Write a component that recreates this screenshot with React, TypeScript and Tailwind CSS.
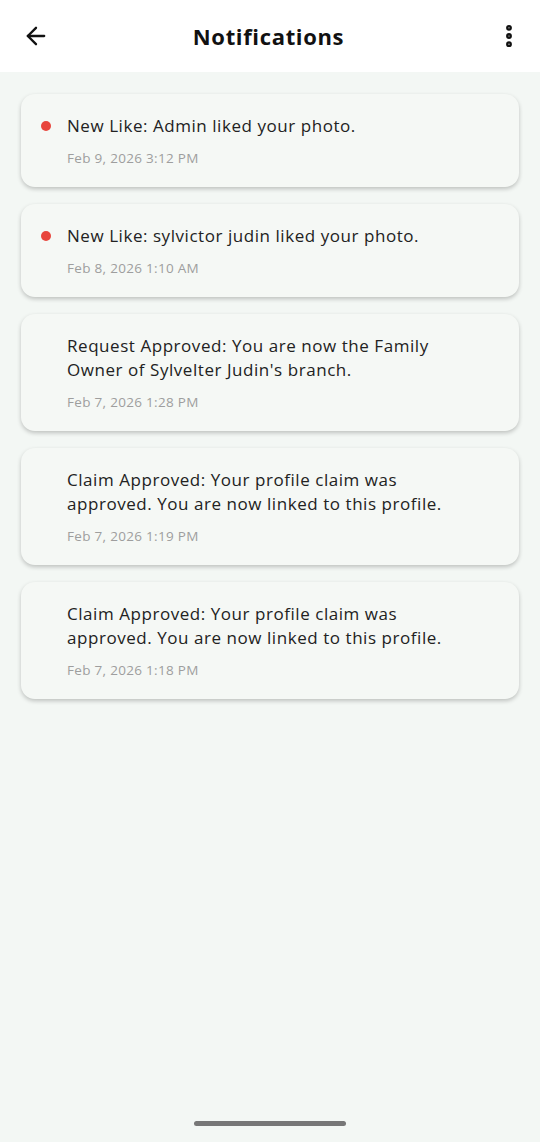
import { ArrowLeft, EllipsisVertical } from 'lucide-react'

type Notificacao = {
  id: number
  linhas: string[]
  data: string
  nova: boolean
}

const notificacoes: Notificacao[] = [
  { id: 1, linhas: ['New Like: Admin liked your photo.'], data: 'Feb 9, 2026 3:12 PM', nova: true },
  { id: 2, linhas: ['New Like: sylvictor judin liked your photo.'], data: 'Feb 8, 2026 1:10 AM', nova: true },
  {
    id: 3,
    linhas: ['Request Approved: You are now the Family', "Owner of Sylvelter Judin's branch."],
    data: 'Feb 7, 2026 1:28 PM',
    nova: false,
  },
  {
    id: 4,
    linhas: ['Claim Approved: Your profile claim was', 'approved. You are now linked to this profile.'],
    data: 'Feb 7, 2026 1:19 PM',
    nova: false,
  },
  {
    id: 5,
    linhas: ['Claim Approved: Your profile claim was', 'approved. You are now linked to this profile.'],
    data: 'Feb 7, 2026 1:18 PM',
    nova: false,
  },
]

function Cartao({ n }: { n: Notificacao }) {
  return (
    <div className="flex rounded-[14px] bg-[#f5f8f5] pl-5 pr-4 pt-5 pb-[19px] shadow-[0_2px_4px_rgba(0,0,0,0.22)]">
      <div className="flex h-6 w-[10px] shrink-0 items-center">
        {n.nova && <span className="h-[10px] w-[10px] rounded-full bg-[#e8453c]" />}
      </div>
      <div className="ml-4 flex flex-col">
        <p className="text-[17px] leading-6 tracking-[0.55px] text-[#222]">
          {n.linhas.map((l, i) => (
            <span key={i} className="block whitespace-nowrap">{l}</span>
          ))}
        </p>
        <p className="mt-[10px] text-[13.5px] leading-5 tracking-[0.3px] text-[#9e9e9e]">{n.data}</p>
      </div>
    </div>
  )
}

export default function App() {
  return (
    <div
      className="flex h-[1142px] w-[540px] flex-col bg-[#f3f7f4]"
      style={{ fontFamily: '"Open Sans", "Noto Sans", sans-serif' }}
    >
      <header className="flex h-[72px] shrink-0 items-center justify-between bg-white px-[22px]">
        <ArrowLeft className="h-7 w-7 text-[#111]" strokeWidth={2} />
        <h1 className="-ml-2 text-[22px] font-bold tracking-[0.65px] text-[#111]">Notifications</h1>
        <EllipsisVertical className="-mr-[5px] h-7 w-7 text-[#111]" strokeWidth={3} />
      </header>

      <main className="flex flex-1 flex-col gap-[17px] px-[21px] pt-[22px]">
        {notificacoes.map((n) => (
          <Cartao key={n.id} n={n} />
        ))}
      </main>

      <div className="flex h-[32px] shrink-0 items-center justify-center pb-[6px]">
        <div className="h-[5px] w-[152px] rounded-full bg-[#777]" />
      </div>
    </div>
  )
}
